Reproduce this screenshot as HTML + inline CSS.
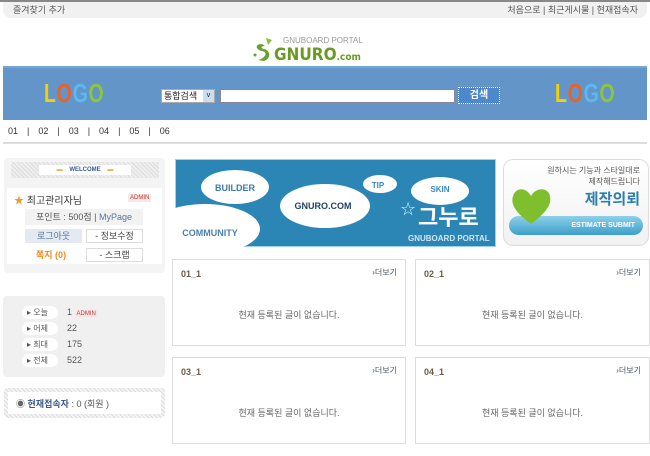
<!DOCTYPE html>
<html><head><meta charset="utf-8"><style>
*{margin:0;padding:0;box-sizing:border-box}
body{width:650px;height:456px;background:#fff;font-family:"Liberation Sans","Noto Sans CJK KR",sans-serif;font-size:9px;color:#555;position:relative;overflow:hidden}
.a{position:absolute}
.box{position:absolute;border:1px solid #ddd;background:#fff}
.box b{position:absolute;left:8px;top:9px;font-size:9px;color:#6b5a45;font-weight:bold}
.box i{position:absolute;right:8px;top:7px;font-style:normal;font-size:8px;color:#456}
.box p{position:absolute;left:0;right:0;top:48px;text-align:center;font-size:9px;color:#666}
.logo{font-family:"Liberation Sans",sans-serif;font-weight:bold;font-size:26px;letter-spacing:1px;transform:scaleX(.75);transform-origin:left}
.pill{position:absolute;left:22px;width:36px;height:13px;background:#fff;border-radius:7px;font-size:8px;color:#555;padding-left:5px;line-height:13px}
</style></head><body>
<div class="a" style="left:0;top:0;width:650px;height:2px;background:#888"></div>
<div class="a" style="left:3px;top:2px;width:644px;height:16px;background:#f1f1f1;border-radius:0 0 8px 8px"></div>
<div class="a" style="left:13px;top:3px;color:#555">즐겨찾기 추가</div>
<div class="a" style="right:12px;top:3px;color:#555">처음으로 | 최근게시물 | 현재접속자</div>
<!-- logo -->
<svg class="a" style="left:252px;top:36px" width="22" height="27"><path d="M14 2 L20 4 L16 9 Z" fill="#8cbf3a"/><path d="M10 8 C2 8 4 14 10 15 C16 16 14 22 6 24 L12 25 C20 22 18 14 12 13 C8 12 9 10 13 10Z" fill="#6aa02e"/><circle cx="3" cy="19" r="1.5" fill="#6aa02e"/></svg>
<div class="a" style="left:283px;top:36px;font-size:8px;color:#999">GNUBOARD PORTAL</div>
<div class="a" style="left:274px;top:45px;font-size:17px;font-weight:bold;color:#6a9a22;font-family:'DejaVu Sans',sans-serif;letter-spacing:0px;transform:scaleX(.9);transform-origin:left">GNURO<span style="font-size:10px">.com</span></div>
<!-- blue band -->
<div class="a" style="left:3px;top:66px;width:644px;height:54px;background:#6495c8;border-top:2px solid #7aa5d2"></div>
<div class="a logo" style="left:44px;top:78px"><span style="color:#f5d000">L</span><span style="color:#e8622a">O</span><span style="color:#5ab8f2">G</span><span style="color:#8cc63a">O</span></div>
<div class="a logo" style="left:555px;top:78px"><span style="color:#f5d000">L</span><span style="color:#e8622a">O</span><span style="color:#5ab8f2">G</span><span style="color:#8cc63a">O</span></div>
<div class="a" style="left:161px;top:89px;width:54px;height:14px;background:#fff;border:1px solid #aaa;font-size:9px;color:#222;padding-left:2px;line-height:12px">통합검색<span style="position:absolute;right:0;top:0;width:11px;height:12px;background:#cde;font-size:7px;text-align:center">v</span></div>
<div class="a" style="left:220px;top:89px;width:235px;height:14px;background:#fff;border:1px solid #889"></div>
<div class="a" style="left:458px;top:87px;width:42px;height:17px;background:#4c88cc;border:1px dotted #fff;color:#fff;font-size:10px;font-weight:bold;text-align:center;line-height:15px">검색</div>
<div class="a" style="left:8px;top:126px;color:#333;font-size:9px;word-spacing:2px">01 &nbsp;| &nbsp;02 &nbsp;| &nbsp;03 &nbsp;| &nbsp;04 &nbsp;| &nbsp;05 &nbsp;| &nbsp;06</div>
<div class="a" style="left:3px;top:142px;width:644px;height:2px;background:#ddd"></div>
<!-- left panel 1 -->
<div class="a" style="left:4px;top:158px;width:161px;height:115px;background:#f4f4f4;border-radius:4px"></div>
<div class="a" style="left:11px;top:162px;width:148px;height:16px;background:repeating-linear-gradient(45deg,#ddd 0 1px,#eee 1px 3px)"></div>
<div class="a" style="left:39px;top:165px;width:92px;height:10px;background:#fff;font-size:6px;font-weight:bold;color:#3a5a9a;text-align:center;line-height:10px"><span style="color:#f0b050">▬</span>&nbsp;&nbsp;&nbsp; WELCOME &nbsp;&nbsp;&nbsp;<span style="color:#f0b050">▬</span></div>
<div class="a" style="left:7px;top:188px;width:155px;height:76px;background:#fff"></div>
<div class="a" style="left:14px;top:192px;font-size:10px;color:#333"><span style="color:#e8a030">★</span> 최고관리자님</div>
<div class="a" style="left:128px;top:194px;background:#f7e8e8;color:#c33;font-size:6px;padding:1px 2px">ADMIN</div>
<div class="a" style="left:25px;top:209px;width:118px;height:16px;background:#f2f2f2;font-size:9px;text-align:center;line-height:16px;color:#555">포인트 : 500점 | <span style="color:#5578a0">MyPage</span></div>
<div class="a" style="left:25px;top:229px;width:57px;height:14px;background:#e4e9f2;font-size:9px;text-align:center;line-height:14px;color:#5578a0">로그아웃</div>
<div class="a" style="left:86px;top:229px;width:57px;height:14px;border:1px solid #ddd;font-size:9px;text-align:center;line-height:12px;color:#444">- 정보수정</div>
<div class="a" style="left:36px;top:248px;font-size:9px;font-weight:bold;color:#f08a20">쪽지 (0)</div>
<div class="a" style="left:86px;top:248px;width:57px;height:14px;border:1px solid #ddd;font-size:9px;text-align:center;line-height:12px;color:#444">- 스크랩</div>
<!-- left panel 2 -->
<div class="a" style="left:3px;top:296px;width:162px;height:81px;background:#f0f0f0;border-radius:4px"></div>
<div class="pill" style="top:306px">▸ 오늘</div><div class="a" style="left:67px;top:307px;font-size:9px">1 <span style="background:#f7e8e8;color:#c33;font-size:6px;padding:1px 2px">ADMIN</span></div>
<div class="pill" style="top:322px">▸ 어제</div><div class="a" style="left:67px;top:323px;font-size:9px">22</div>
<div class="pill" style="top:338px">▸ 최대</div><div class="a" style="left:67px;top:339px;font-size:9px">175</div>
<div class="pill" style="top:354px">▸ 전체</div><div class="a" style="left:67px;top:355px;font-size:9px">522</div>
<!-- panel 3 -->
<div class="a" style="left:4px;top:388px;width:161px;height:30px;background:repeating-linear-gradient(45deg,#ddd 0 1px,#f4f4f4 1px 3px);border-radius:4px"></div>
<div class="a" style="left:8px;top:392px;width:153px;height:22px;background:#fff"></div>
<div class="a" style="left:16px;top:397px;font-size:9px;color:#555"><span style="color:#666">◉</span> <b style="color:#3a5a8a">현재접속자</b> : 0 (회원 )</div>
<!-- banner -->
<svg class="a" style="left:175px;top:159px" width="321" height="88">
<rect x="0.5" y="0.5" width="320" height="87" fill="#2b86b6" stroke="#9cd0f0"/>
<ellipse cx="60" cy="28" rx="34" ry="17" fill="#fff"/>
<ellipse cx="150" cy="47" rx="45" ry="22" fill="#fff"/>
<ellipse cx="30" cy="70" rx="55" ry="25" fill="#fff"/>
<rect x="1" y="55" width="40" height="32" fill="#fff"/>
<ellipse cx="205" cy="25" rx="17" ry="9" fill="#fff"/>
<ellipse cx="265" cy="32" rx="29" ry="14" fill="#fff"/>
<text x="60" y="32" font-size="9" font-weight="bold" fill="#3a7ab0" text-anchor="middle" font-family="Liberation Sans">BUILDER</text>
<text x="148" y="50" font-size="9" font-weight="bold" fill="#224466" text-anchor="middle" font-family="Liberation Sans">GNURO.COM</text>
<text x="35" y="77" font-size="9" font-weight="bold" fill="#4a80b0" text-anchor="middle" font-family="Liberation Sans">COMMUNITY</text>
<text x="203" y="29" font-size="8" font-weight="bold" fill="#3a8ac0" text-anchor="middle" font-family="Liberation Sans">TIP</text>
<text x="265" y="33" font-size="8" font-weight="bold" fill="#3a8ac0" text-anchor="middle" font-family="Liberation Sans">SKIN</text>
<text x="225" y="56" font-size="18" fill="#cfe" font-family="DejaVu Sans">☆</text>
<text x="243" y="66" font-size="22" fill="#fff" font-weight="bold" font-family="Noto Sans CJK KR">그누로</text>
<text x="233" y="82" font-size="8" font-weight="bold" fill="#cfe6f4" font-family="Liberation Sans">GNUBOARD PORTAL</text>
</svg>
<!-- right banner -->
<div class="a" style="left:503px;top:159px;width:146px;height:87px;border:1px solid #ddd;border-radius:10px;background:linear-gradient(#fff,#f1f1f1)"></div>
<div class="a" style="right:10px;top:165px;font-size:8px;color:#555;text-align:right;line-height:11px">원하시는 기능과 스타일대로<br>제작해드립니다</div>
<div class="a" style="right:10px;top:188px;font-size:15px;font-weight:bold;color:#2a7fb0">제작의뢰</div>
<div class="a" style="left:509px;top:216px;width:134px;height:19px;border-radius:10px;background:linear-gradient(#8dd0ea,#3c9fc8);color:#fff;font-size:7px;font-weight:bold;text-align:right;padding-right:8px;line-height:19px">ESTIMATE SUBMIT</div>
<svg class="a" style="left:510px;top:184px" width="42" height="42"><path d="M21 40 C8 30 0 22 3 12 C6 3 16 3 21 12 C26 3 38 3 40 12 C42 22 34 30 21 40Z" fill="#7fbf2e"/></svg>
<!-- boxes -->
<div class="box" style="left:172px;top:259px;width:234px;height:87px"><b>01_1</b><i>›더보기</i><p>현재 등록된 글이 없습니다.</p></div>
<div class="box" style="left:415px;top:259px;width:235px;height:87px"><b>02_1</b><i>›더보기</i><p>현재 등록된 글이 없습니다.</p></div>
<div class="box" style="left:172px;top:357px;width:234px;height:87px"><b>03_1</b><i>›더보기</i><p>현재 등록된 글이 없습니다.</p></div>
<div class="box" style="left:415px;top:357px;width:235px;height:87px"><b>04_1</b><i>›더보기</i><p>현재 등록된 글이 없습니다.</p></div>
</body></html>
